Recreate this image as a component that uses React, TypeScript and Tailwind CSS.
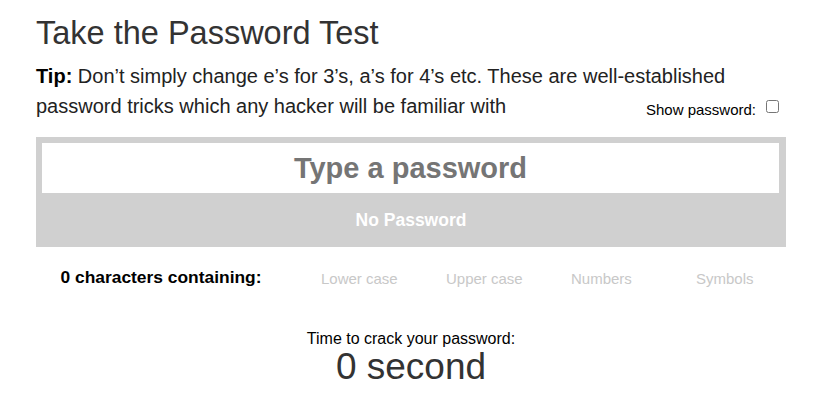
import React, { useState } from "react";

const checks = ["Lower case", "Upper case", "Numbers", "Symbols"];

const App = () => {
  const [show, setShow] = useState(false);
  const [pw, setPw] = useState("");

  return (
    <div className="w-[820px] h-[408px] bg-white px-[36px] font-['Liberation_Sans',Arial,sans-serif] overflow-hidden">
      <h1 className="pt-[15px] text-[32.5px] leading-[37px] text-[#333]">
        Take the Password Test
      </h1>
      <p className="mt-[9px] text-[20px] leading-[30px] text-[#222]">
        <strong className="font-bold text-black">Tip:</strong> Don’t simply
        change e’s for 3’s, a’s for 4’s etc. These are well-established password
        tricks which any hacker will be familiar with
        <span className="float-right flex items-center gap-[10px] text-[15px] text-black mt-[4px] mr-[5px]">
          Show password:
          <input
            type="checkbox"
            checked={show}
            onChange={() => setShow(!show)}
            className="w-[13px] h-[13px] -mt-[7px]"
          />
        </span>
      </p>

      <div className="mt-[16px] w-[750px] bg-[#d0d0d0] pt-[6px] px-[6px]">
        <input
          type={show ? "text" : "password"}
          value={pw}
          onChange={(e) => setPw(e.target.value)}
          placeholder="Type a password"
          className="w-[737px] h-[50px] bg-white text-center text-[29px] font-bold text-[#333] placeholder:text-[#757575] outline-none"
        />
        <div className="h-[54px] flex items-center justify-center text-[17.5px] font-bold text-white">
          No Password
        </div>
      </div>

      <div className="mt-[20px] w-[750px] grid grid-cols-6 items-start leading-[20px]">
        <div className="col-span-2 text-center text-[17.4px] font-bold text-black">
          {pw.length} characters containing:
        </div>
        {checks.map((c) => (
          <div key={c} className="pl-[35px] pt-[2px] text-[15px] text-[#c8c8c8]">
            {c}
          </div>
        ))}
      </div>

      <div className="mt-[42px] w-[750px] flex flex-col items-center">
        <div className="text-[16px] leading-[16px] text-black">
          Time to crack your password:
        </div>
        <div className="text-[37px] leading-[40px] text-[#333]">0 second</div>
      </div>
    </div>
  );
};

export default App;
